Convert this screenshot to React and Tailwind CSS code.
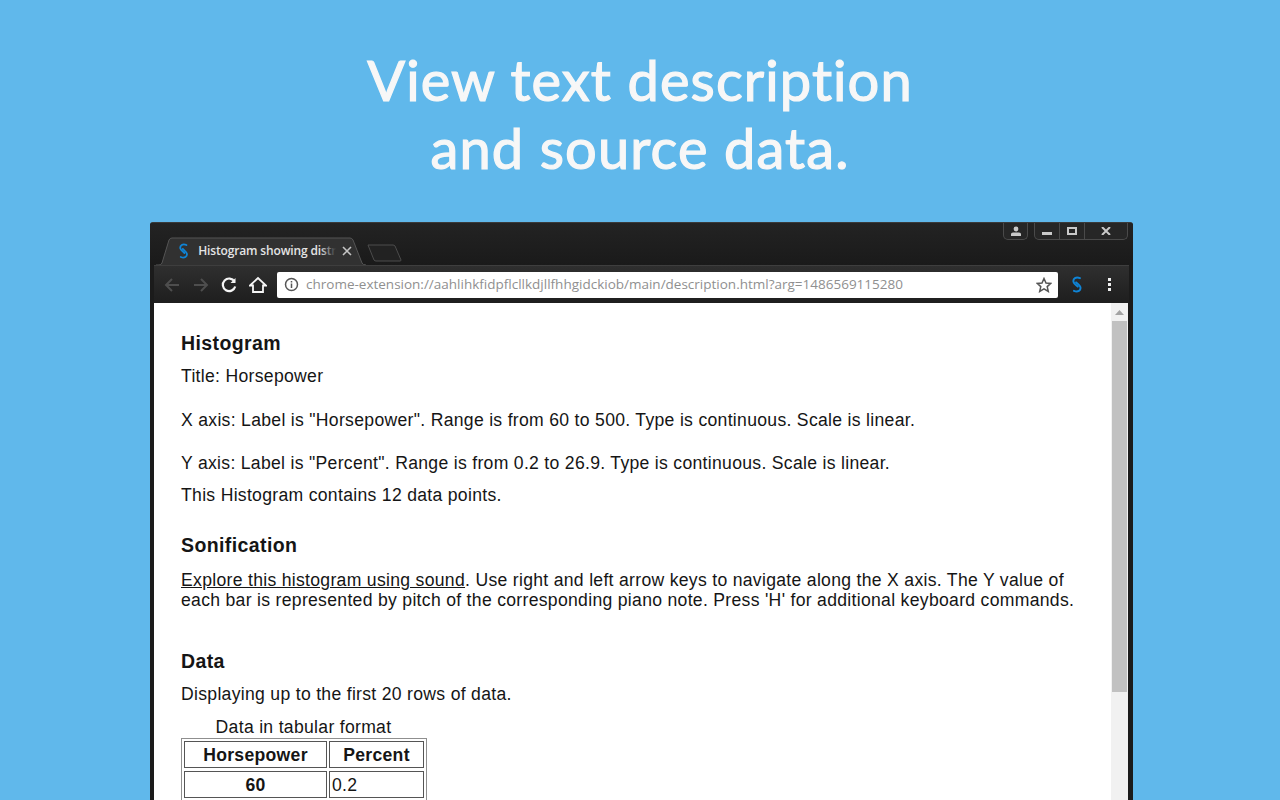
import React from "react";

const S = ({ size = 16, color = "#0f84d6" }) => (
  <svg width={size * 0.7} height={size} viewBox="0 0 14 20" fill="none" stroke={color} strokeWidth="2.3" strokeLinecap="round">
    <path d="M10.5 2.5 C6 0.5 2 3 3 7 C3.5 9 6 10.5 8 12.5" />
    <path d="M3.5 17.5 C8 19.5 12 17 11 13 C10.5 11 8 9.5 6 7.5" />
  </svg>
);

const H2 = ({ className, children }) => (
  <h2 className={`text-[19.5px] leading-[23px] font-bold tracking-[0.4px] ${className}`}>{children}</h2>
);

export default function App() {
  return (
    <div className="w-[1280px] h-[800px] overflow-hidden bg-[#60b8eb] flex flex-col" style={{ fontFamily: '"Liberation Sans", Arial, sans-serif' }}>
      <h1 className="h-[222px] shrink-0 pt-[46px] w-full text-center text-[#f7f7f7] text-[56px] leading-[68px] font-normal tracking-[1.1px] [-webkit-text-stroke:1.2px_#f7f7f7]" style={{ fontFamily: 'Lato, sans-serif' }}>
        View text description<br />and source data.
      </h1>

      <div className="ml-[150px] w-[983px] flex-1 min-h-0 flex flex-col bg-[#1b1b1b] rounded-t-[3px] border-t border-[#3a3a3a] overflow-hidden">
        {/* tab strip */}
        <div className="h-[42px] shrink-0 flex items-end pl-[4px] relative bg-gradient-to-b from-[#232323] to-[#1a1a1a]">
          <div className="relative w-[212px] h-[28px] flex items-center pl-[24px]">
            <svg className="absolute inset-0" width="212" height="28" viewBox="0 0 212 28">
              <path d="M2 28 H5 Q7 28 8 26 L15 3 Q16 1 18 1 H196 Q198 1 199 3 L208 26 Q209 28 212 28" fill="#313131" stroke="#555" strokeWidth="1" />
            </svg>
            <span className="relative flex items-center"><S size={16} /></span>
            <span className="relative ml-[9px] w-[138px] overflow-hidden whitespace-nowrap text-[12px] text-[#e4e4e4]" style={{ fontFamily: '"Open Sans", sans-serif', fontWeight: 600, letterSpacing: "-0.15px" }}>
              Histogram showing distri
              <span className="absolute right-0 top-0 bottom-0 w-[16px] bg-gradient-to-r from-transparent to-[#313131]" />
            </span>
            <span className="relative ml-[6px]">
              <svg width="10" height="10" viewBox="0 0 10 10" stroke="#c4c4c4" strokeWidth="1.6"><path d="M1 1 L9 9 M9 1 L1 9" /></svg>
            </span>
          </div>
          <svg className="mb-[3px] ml-[1px]" width="36" height="18" viewBox="0 0 36 18" fill="none">
            <path d="M1 1 H26 Q27 1 28 2 L34 16 Q34 17 33 17 H9 Q8 17 7 16 Z" fill="#222" stroke="#4c4c4c" />
          </svg>
          <div className="absolute top-[-1px] right-[5px] flex items-start gap-[6px]">
            <div className="w-[25px] h-[18px] border border-t-0 border-[#4a4a4a] rounded-b-[5px] bg-[#262626] flex items-center justify-center">
              <svg width="12" height="10" viewBox="0 0 12 10" fill="#c9c9c9"><circle cx="6" cy="3" r="2.4" /><path d="M1 10 V8 Q1 6.5 3 6.5 H9 Q11 6.5 11 8 V10 Z" /></svg>
            </div>
            <div className="h-[18px] flex border border-t-0 border-[#4a4a4a] rounded-b-[5px] bg-[#262626]">
              <div className="w-[25px] flex items-center justify-center border-r border-[#4a4a4a]"><span className="block w-[10px] h-[3px] mt-[5px] bg-[#c9c9c9]" /></div>
              <div className="w-[25px] flex items-center justify-center border-r border-[#4a4a4a]"><span className="block w-[10px] h-[8px] border-2 border-[#c9c9c9]" /></div>
              <div className="w-[42px] flex items-center justify-center">
                <svg width="10" height="8" viewBox="0 0 10 8" stroke="#c9c9c9" strokeWidth="2"><path d="M1 0 L9 8 M9 0 L1 8" /></svg>
              </div>
            </div>
          </div>
        </div>

        {/* toolbar */}
        <div className="h-[38px] shrink-0 mx-[4px] flex items-center bg-gradient-to-b from-[#2f2f2f] to-[#1e1e1e] border-t border-[#3e3e3e]">
          <div className="w-[123px] flex items-center pl-[9px] gap-[11px]">
            <svg width="18" height="18" viewBox="0 0 18 18" fill="none" stroke="#4e4e4e" strokeWidth="2"><path d="M16 9 H3 M9 3 L3 9 L9 15" /></svg>
            <svg width="18" height="18" viewBox="0 0 18 18" fill="none" stroke="#4e4e4e" strokeWidth="2"><path d="M2 9 H15 M9 3 L15 9 L9 15" /></svg>
            <svg className="-ml-[1px]" width="18" height="18" viewBox="0 0 18 18" fill="none" stroke="#f5f5f5" strokeWidth="2.2"><path d="M14.5 5.5 A6.3 6.3 0 1 0 15.2 10.5" /><path d="M15.5 2 V7 H10.5 Z" fill="#f5f5f5" stroke="none" /></svg>
            <svg width="18" height="18" viewBox="0 0 18 18" fill="none" stroke="#f5f5f5" strokeWidth="1.8"><path d="M1 9.5 L9 2 L17 9.5 H14 V16 H4 V9.5 Z" /></svg>
          </div>
          <div className="w-[781px] h-[26px] bg-white rounded-[2px] flex items-center pl-[7px] pr-[6px]">
            <svg width="15" height="15" viewBox="0 0 15 15" fill="none" stroke="#555" strokeWidth="1.5"><circle cx="7.5" cy="7.5" r="6" /><path d="M7.5 6.5 V11 M7.5 4 V5.4" /></svg>
            <span className="ml-[7px] text-[13.5px] text-[#8f8f8f] whitespace-nowrap flex-1" style={{ fontFamily: '"Open Sans", sans-serif' }}>chrome-extension://aahlihkfidpflcllkdjllfhhgidckiob/main/description.html?arg=1486569115280</span>
            <svg width="16" height="16" viewBox="0 0 16 16" fill="none" stroke="#555" strokeWidth="1.5"><path d="M8 1.5 L10 6 L14.8 6.4 L11.2 9.6 L12.3 14.4 L8 11.8 L3.7 14.4 L4.8 9.6 L1.2 6.4 L6 6 Z" /></svg>
          </div>
          <div className="w-[38px] flex justify-center"><S size={17} /></div>
          <div className="flex flex-col gap-[2px] ml-[12px]">
            <span className="block w-[3px] h-[3px] bg-[#eee]" /><span className="block w-[3px] h-[3px] bg-[#eee]" /><span className="block w-[3px] h-[3px] bg-[#eee]" />
          </div>
        </div>

        {/* page */}
        <div className="flex-1 min-h-0 ml-[4px] mr-[5px] flex bg-white overflow-hidden">
          <div className="w-[957px] shrink-0 pl-[27px] pr-[26px] text-[#151515] text-[17.6px] leading-[20px] tracking-[0.3px]">
            <H2 className="mt-[29px]">Histogram</H2>
            <p className="mt-[11px]">Title: Horsepower</p>
            <p className="mt-[24px]">X axis: Label is "Horsepower". Range is from 60 to 500. Type is continuous. Scale is linear.</p>
            <p className="mt-[23px]">Y axis: Label is "Percent". Range is from 0.2 to 26.9. Type is continuous. Scale is linear.</p>
            <p className="mt-[12px]">This Histogram contains 12 data points.</p>
            <H2 className="mt-[29px]">Sonification</H2>
            <p className="mt-[13px]"><span className="underline">Explore this histogram using sound</span>. Use right and left arrow keys to navigate along the X axis. The Y value of each bar is represented by pitch of the corresponding piano note. Press 'H' for additional keyboard commands.</p>
            <H2 className="mt-[40px]">Data</H2>
            <p className="mt-[11px]">Displaying up to the first 20 rows of data.</p>
            <div className="mt-[13px] w-[245px] text-center">Data in tabular format</div>
            <div className="mt-[1px] w-[246px] border border-[#8f8f8f] p-[2px] grid grid-cols-[143px_95px] gap-x-[2px] gap-y-[3px]">
              <div className="h-[27px] border border-[#555] flex items-center justify-center font-bold">Horsepower</div>
              <div className="h-[27px] border border-[#555] flex items-center justify-center font-bold">Percent</div>
              <div className="h-[27px] border border-[#555] flex items-center justify-center font-bold">60</div>
              <div className="h-[27px] border border-[#555] flex items-center pl-[2px]">0.2</div>
            </div>
          </div>
          <div className="w-[17px] shrink-0 bg-[#f1f1f1] flex flex-col">
            <div className="h-[18px] flex items-center justify-center">
              <svg width="9" height="5" viewBox="0 0 9 5" fill="#a3a3a3"><path d="M4.5 0 L9 5 H0 Z" /></svg>
            </div>
            <div className="mx-[1px] h-[371px] bg-[#c1c1c1]" />
          </div>
        </div>
      </div>
    </div>
  );
}
